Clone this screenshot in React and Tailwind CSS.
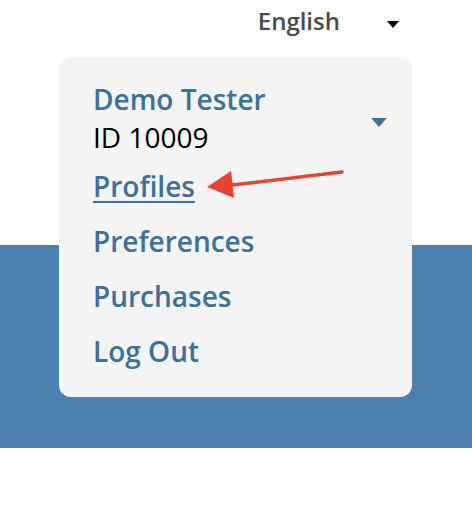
import { useState } from 'react';

const menu = ['Profiles', 'Preferences', 'Purchases', 'Log Out'];

function Caret({ className }) {
  return (
    <svg viewBox="0 0 14 8" className={className}>
      <path d="M0 0 L14 0 L7 8 Z" fill="currentColor" />
    </svg>
  );
}

function Arrow() {
  return (
    <svg
      className="absolute left-[143px] top-[110px]"
      width="145"
      height="36"
      viewBox="0 0 145 36"
    >
      <line x1="140" y1="5" x2="22" y2="19" stroke="#e8432d" strokeWidth="3.5" strokeLinecap="round" />
      <path d="M5 20 L29 4 L32 31 Z" fill="#e8432d" />
    </svg>
  );
}

export default function App() {
  const [active] = useState('Profiles');

  return (
    <div className="relative w-[472px] h-[512px] bg-white font-['Open_Sans',sans-serif]">
      <div className="h-[245px] flex justify-end pr-[73px] pt-[4px]">
        <div className="flex items-start gap-[47px]">
          <span className="text-[24px] leading-[34px] font-semibold text-[#4a4a4a]">English</span>
          <Caret className="w-[12px] h-[7px] mt-[17px] text-black" />
        </div>
      </div>
      <div className="h-[203px] bg-[#4a81ae]" />

      <div className="absolute left-[59px] top-[57px] w-[353px] h-[340px] rounded-[12px] bg-[#f4f4f4] pl-[34px] pr-[25px] pt-[23px]">
        <div className="flex items-start justify-between">
          <div className="text-[28px] leading-[38px]">
            <div className="font-semibold text-[#3a71a0]">Demo Tester</div>
            <div className="text-black">ID 10009</div>
          </div>
          <Caret className="w-[16px] h-[9px] mt-[38px] text-[#3a71a0]" />
        </div>
        <ul className="mt-[11px] flex flex-col gap-[17px]">
          {menu.map((m) => (
            <li
              key={m}
              className={
                'text-[28px] font-semibold leading-[38px] text-[#3a71a0] ' +
                (m === active ? 'underline underline-offset-[4px] decoration-2' : '')
              }
            >
              {m}
            </li>
          ))}
        </ul>
        <Arrow />
      </div>
    </div>
  );
}
